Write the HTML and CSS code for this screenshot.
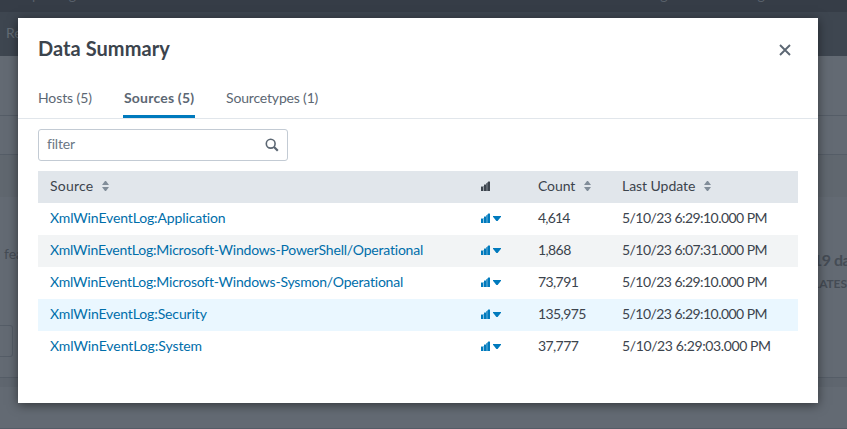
FILE: index.html
```html
<!DOCTYPE html>
<html lang="en">
<head>
<meta charset="utf-8">
<title>Data Summary</title>
<link rel="stylesheet" href="styles.css">
</head>
<body>
<svg class="defs" aria-hidden="true">
  <symbol id="bars" viewBox="0 0 9 10"><path opacity=".45" d="M0 5h3V3h3V1h1V0h2v10H0z"/><path d="M0 6h2v4H0zM3 4h2v6H3zM5.4 2h1.2v8H5.4zM7 1h2v9H7z"/></symbol>
  <symbol id="sort" viewBox="0 0 7 10"><path d="M0 4 3 0h1l3 4zM0 6h7l-3 4H3z"/></symbol>
  <symbol id="caret" viewBox="0 0 8 5"><path d="M0 0h8v.8L4.6 5H3.4L0 .8z"/></symbol>
</svg>
<div class="page">
  <div class="topbar"><span class="frag frag-a">p</span><span class="frag frag-b">g</span><span class="frag frag-c">g</span><span class="frag frag-d">g</span></div>
  <div class="navbar"><span>Reports</span></div>
  <div class="band search"></div>
  <div class="band options"></div>
  <div class="band spacer"></div>
  <div class="band content">
    <div class="left"><p>features</p><div class="button"></div></div>
    <div class="right"><strong>19 days</strong><small>LATEST</small></div>
  </div>
  <div class="band footer"></div>
</div>
<main class="modal">
  <header>
    <h1>Data Summary</h1>
    <svg class="close" viewBox="0 0 12 12"><path d="M1 1l10 10M11 1 1 11"/></svg>
  </header>
  <nav>
    <a class="hosts">Hosts (5)</a>
    <a class="active">Sources (5)</a>
    <a class="types">Sourcetypes (1)</a>
  </nav>
  <div class="filter"><span>filter</span>
    <svg viewBox="0 0 14 14"><circle cx="5.7" cy="5.7" r="4.4"/><path d="M9 9l3.8 3.8" class="handle"/></svg>
  </div>
  <div class="table">
    <div class="row head"><span><b class="h-source">Source</b><svg class="sort"><use href="#sort"/></svg></span><span><svg class="bars"><use href="#bars"/></svg></span><span><b class="h-count">Count</b><svg class="sort"><use href="#sort"/></svg></span><span><b class="h-update">Last Update</b><svg class="sort"><use href="#sort"/></svg></span></div>
    <div class="row"><a class="s1">XmlWinEventLog:Application</a><a><svg class="bars"><use href="#bars"/></svg><svg class="caret"><use href="#caret"/></svg></a><span class="c1">4,614</span><span class="t1">5/10/23 6:29:10.000 PM</span></div>
    <div class="row even"><a class="s2">XmlWinEventLog:Microsoft-Windows-PowerShell/Operational</a><a><svg class="bars"><use href="#bars"/></svg><svg class="caret"><use href="#caret"/></svg></a><span class="c2">1,868</span><span class="t2">5/10/23 6:07:31.000 PM</span></div>
    <div class="row"><a class="s3">XmlWinEventLog:Microsoft-Windows-Sysmon/Operational</a><a><svg class="bars"><use href="#bars"/></svg><svg class="caret"><use href="#caret"/></svg></a><span class="c3">73,791</span><span class="t3">5/10/23 6:29:10.000 PM</span></div>
    <div class="row hover"><a class="s4">XmlWinEventLog:Security</a><a><svg class="bars"><use href="#bars"/></svg><svg class="caret"><use href="#caret"/></svg></a><span class="c4">135,975</span><span class="t4">5/10/23 6:29:10.000 PM</span></div>
    <div class="row"><a class="s5">XmlWinEventLog:System</a><a><svg class="bars"><use href="#bars"/></svg><svg class="caret"><use href="#caret"/></svg></a><span class="c5">37,777</span><span class="t5">5/10/23 6:29:03.000 PM</span></div>
  </div>
</main>
</body>
</html>
```
FILE: styles.css
```css
* { box-sizing: border-box; }
body { margin: 0; width: 847px; height: 429px; overflow: hidden; font: 14px/20px Lato, sans-serif; color: #3c444d; background: #636a73; }
.defs { position: absolute; width: 0; height: 0; }
.page { height: 429px; overflow: hidden; color: #454c55; }
.topbar { height: 12px; background: #363d47; overflow: hidden; color: #59616b; display: flex; line-height: 20px; }
.frag { margin-top: -15px; }
.frag-a { margin-left: 32px; }
.frag-b { margin-left: 29px; }
.frag-c { margin-left: 584px; }
.frag-d { margin-left: 90px; }
.navbar { height: 44px; background: #3e4650; color: #646c75; padding: 11px 6px; }
.band { border-bottom: 1px solid #555d67; }
.search { height: 60px; }
.options { height: 39px; }
.spacer { height: 42px; border: 0; background: #60676f; }
.content { height: 181px; display: flex; justify-content: space-between; }
.left { width: 40px; padding-top: 47px; }
.left p { margin: 0 0 0 4px; }
.button { width: 13px; height: 32px; margin-top: 61px; border: 1px solid #555d67; border-left: 0; border-radius: 0 3px 3px 0; }
.right { width: 31px; padding-top: 53px; overflow: hidden; white-space: nowrap; }
.right strong { display: block; font-size: 16px; line-height: 20px; letter-spacing: -.5px; margin-left: -3px; }
.right small { display: block; font-size: 12px; font-weight: 700; line-height: 16px; margin-top: 6px; margin-left: -3px; letter-spacing: -.1px; }
.footer { height: 51px; border-top: 9px solid #5f666f; }
.modal { position: absolute; left: 18px; top: 18px; width: 800px; height: 385px; background: #fff; box-shadow: 0 2px 10px rgba(0,0,0,.5); }
header { height: 60px; padding: 18px 27px 0 20px; display: flex; justify-content: space-between; }
h1 { margin: 0; font: 700 20px/24px Lato, sans-serif; letter-spacing: .05px; }
.close { width: 12px; height: 12px; margin-top: 8px; stroke: #5c6773; stroke-width: 1.9; fill: none; }
nav { height: 41px; border-bottom: 1px solid #e1e6eb; padding-left: 20px; display: flex; color: #5c6773; white-space: nowrap; }
nav a { height: 40px; padding-top: 10px; }
.hosts { width: 85px; letter-spacing: -.1px; }
.active { width: 72px; margin-right: 31px; border-bottom: 3px solid #007abd; font-weight: 700; padding-left: 1px; letter-spacing: .2px; }
.types { letter-spacing: -.17px; }
.filter { width: 250px; height: 32px; margin: 10px 0 10px 20px; border: 1px solid #c3cbd4; border-radius: 3px; padding: 0 8px; display: flex; align-items: center; justify-content: space-between; color: #6b7785; }
.filter span { padding-bottom: 2px; letter-spacing: -.2px; }
.filter svg { width: 14px; height: 14px; fill: none; stroke: #5c6773; stroke-width: 1.6; }
.filter .handle { stroke-width: 2.2; }
.table { width: 760px; margin-left: 20px; }
.row { height: 32px; display: grid; grid-template-columns: 431px 57px 84px 1fr; padding-left: 12px; align-items: center; white-space: nowrap; }
.row > * { display: flex; align-items: center; height: 20px; margin-bottom: 2px; }
.head { background: #e1e6eb; }
.head b { font-weight: 400; }
.even { background: #f2f4f5; }
.hover { background: #eaf7ff; }
.row a { color: #006eaa; }
.bars { width: 9px; height: 10px; fill: currentColor; }
.row a .bars, .row a .caret { fill: #007abd; }
.caret { width: 8px; height: 5px; margin-left: 3px; fill: currentColor; }
.sort { width: 7px; height: 10px; margin-left: 9px; fill: #818d99; }
.h-source { letter-spacing: .2px; }
.h-count { letter-spacing: -.1px; }
.h-update { letter-spacing: -.05px; }
.s1 { letter-spacing: -.13px; }
.s2, .s3 { letter-spacing: -.21px; }
.s4 { letter-spacing: -.12px; }
.s5 { letter-spacing: -.08px; }
.c1 { letter-spacing: -.8px; }
.c2, .c3, .c4, .c5 { letter-spacing: -.6px; }
.t1, .t2, .t3, .t4 { letter-spacing: -.55px; }
.t5 { letter-spacing: -.38px; }
```
